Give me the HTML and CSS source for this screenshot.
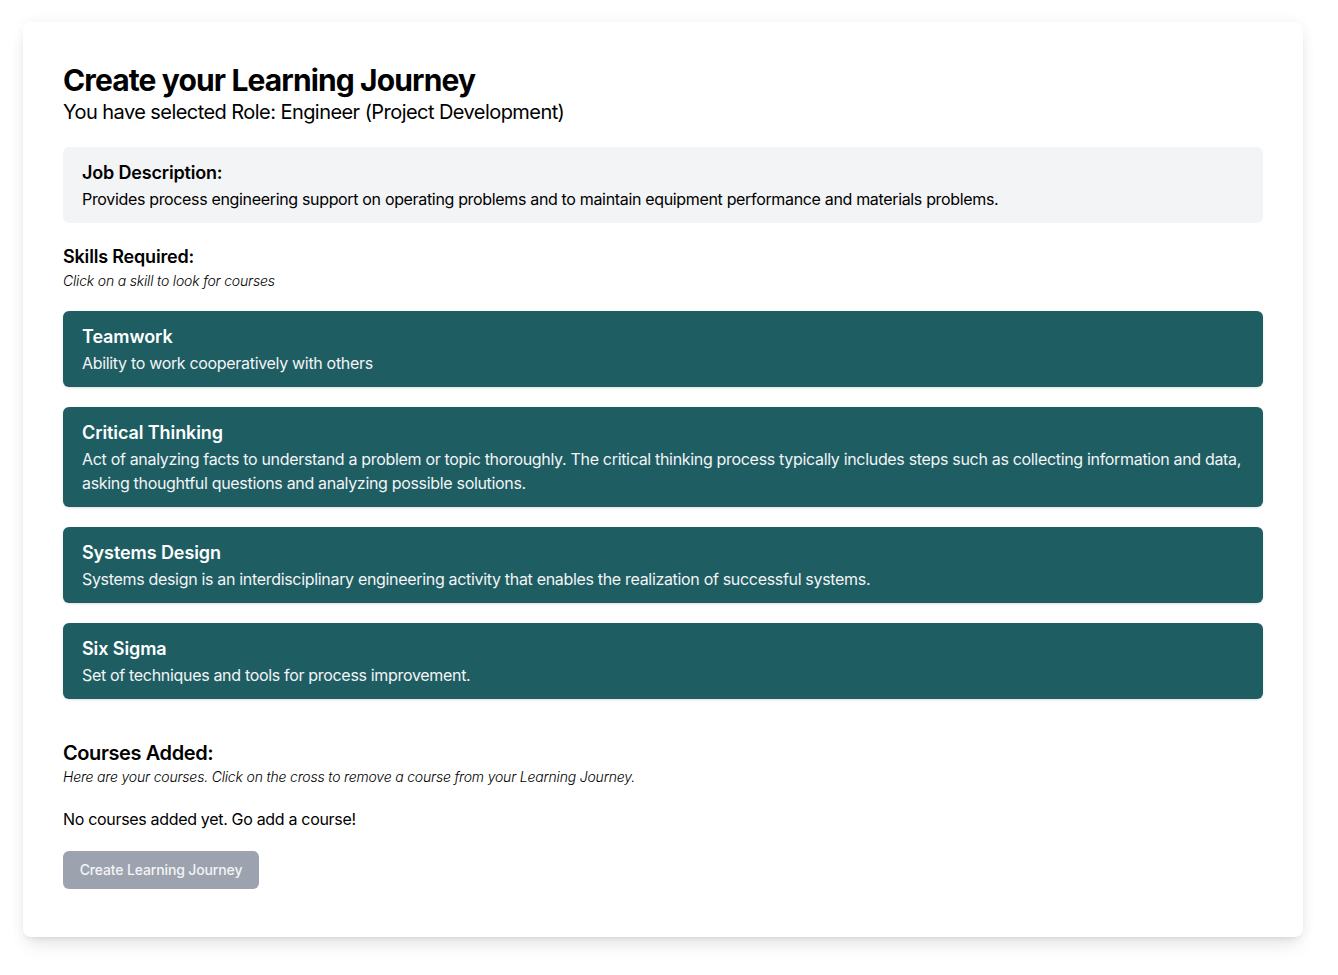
FILE: index.html
```html
<!DOCTYPE html>
<html lang="en">
<head>
<meta charset="utf-8">
<title>Create your Learning Journey</title>
<link rel="stylesheet" href="styles.css">
</head>
<body>
<main class="card">
  <h1 class="title">Create your Learning Journey</h1>
  <p class="subtitle">You have selected Role: Engineer (Project Development)</p>

  <section class="job">
    <h3 class="job-title">Job Description:</h3>
    <p class="job-text">Provides process engineering support on operating problems and to maintain equipment performance and materials problems.</p>
  </section>

  <section class="skills">
    <h3 class="section-title">Skills Required:</h3>
    <p class="hint">Click on a skill to look for courses</p>
    <div class="skill-list">
      <div class="skill">
        <h4 class="skill-name">Teamwork</h4>
        <p class="skill-desc">Ability to work cooperatively with others</p>
      </div>
      <div class="skill">
        <h4 class="skill-name">Critical Thinking</h4>
        <p class="skill-desc">Act of analyzing facts to understand a problem or topic thoroughly. The critical thinking process typically includes steps such as collecting information and data, asking thoughtful questions and analyzing possible solutions.</p>
      </div>
      <div class="skill">
        <h4 class="skill-name">Systems Design</h4>
        <p class="skill-desc">Systems design is an interdisciplinary engineering activity that enables the realization of successful systems.</p>
      </div>
      <div class="skill">
        <h4 class="skill-name">Six Sigma</h4>
        <p class="skill-desc">Set of techniques and tools for process improvement.</p>
      </div>
    </div>
  </section>

  <section class="courses">
    <h3 class="courses-title">Courses Added:</h3>
    <p class="hint">Here are your courses. Click on the cross to remove a course from your Learning Journey.</p>
    <p class="empty">No courses added yet. Go add a course!</p>
    <button class="btn" type="button" disabled>Create Learning Journey</button>
  </section>
</main>
</body>
</html>
```

FILE: styles.css
```css
* { box-sizing: border-box; }

html, body {
  margin: 0;
  padding: 0;
  background: #ffffff;
}

body {
  font-family: Inter, "Noto Sans", sans-serif;
  color: #000;
  padding: 22px 0 40px 23px;
}

p, h1, h3, h4 { margin: 0; }

.card {
  width: 1280px;
  background: #fff;
  border-radius: 8px;
  box-shadow: 0 0 14px rgba(0,0,0,0.05), 0 12px 18px -4px rgba(0,0,0,0.09), 0 4px 6px -4px rgba(0,0,0,0.1);
  padding: 40px 40px 48px;
}

.title {
  font-size: 30px;
  line-height: 36px;
  font-weight: 700;
  letter-spacing: -0.029em;
}

.subtitle {
  font-size: 20px;
  line-height: 28px;
  letter-spacing: -0.028em;
}

.job {
  margin-top: 21px;
  background: #f3f4f6;
  border-radius: 6px;
  padding: 12px 19px;
}

.job-title {
  font-size: 18px;
  line-height: 28px;
  font-weight: 600;
  letter-spacing: -0.01em;
}

.job-text {
  font-size: 16px;
  line-height: 24px;
  letter-spacing: -0.021em;
}

.skills { margin-top: 20px; }

.section-title {
  font-size: 18px;
  line-height: 28px;
  font-weight: 600;
  letter-spacing: -0.01em;
}

.hint {
  font-size: 14px;
  line-height: 20px;
  font-style: italic;
  font-weight: 300;
  letter-spacing: -0.013em;
}

.skill-list {
  margin-top: 20px;
  display: flex;
  flex-direction: column;
  gap: 20px;
}

.skill {
  background: #1e5e63;
  color: #fff;
  border-radius: 6px;
  padding: 12px 19px;
  box-shadow: 0 1px 3px 0 rgba(0,0,0,0.1), 0 1px 2px -1px rgba(0,0,0,0.1);
  cursor: pointer;
}

.skill-name {
  font-size: 18px;
  line-height: 28px;
  font-weight: 600;
  letter-spacing: -0.005em;
}

.skill-desc {
  font-size: 16px;
  line-height: 24px;
  color: #f3f4f6;
  letter-spacing: -0.02em;
}

.courses { margin-top: 40px; }

.courses-title {
  font-size: 20px;
  line-height: 28px;
  font-weight: 600;
  letter-spacing: -0.02em;
}

.empty {
  margin-top: 20px;
  font-size: 16px;
  line-height: 24px;
  letter-spacing: -0.02em;
}

.btn {
  margin-top: 20px;
  display: block;
  font-family: Inter, "Noto Sans", sans-serif;
  font-size: 14px;
  line-height: 20px;
  font-weight: 500;
  letter-spacing: -0.01em;
  white-space: nowrap;
  color: #f3f4f6;
  background: #9ca3af;
  border: none;
  border-radius: 6px;
  padding: 9px 0;
  width: 196px;
  text-align: center;
}
```
